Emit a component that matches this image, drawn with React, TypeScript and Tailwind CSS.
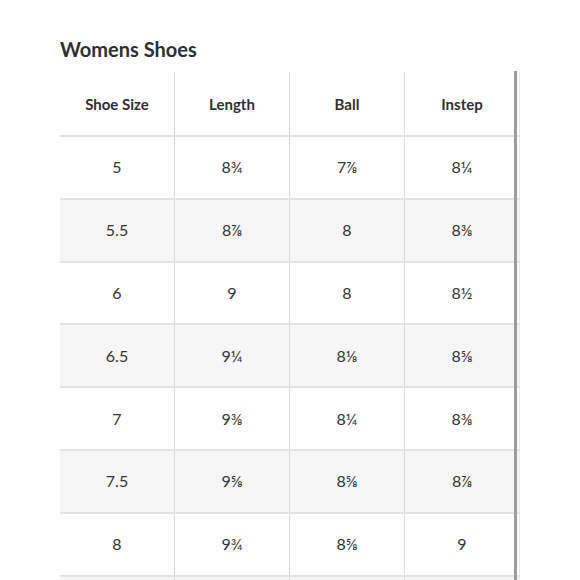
import React from "react";

const headers = ["Shoe Size", "Length", "Ball", "Instep"];

const rows: string[][] = [
  ["5", "8¾", "7⅞", "8¼"],
  ["5.5", "8⅞", "8", "8⅜"],
  ["6", "9", "8", "8½"],
  ["6.5", "9¼", "8⅛", "8⅝"],
  ["7", "9⅜", "8¼", "8⅜"],
  ["7.5", "9⅝", "8⅝", "8⅞"],
  ["8", "9¾", "8⅝", "9"],
  ["", "", "", ""],
];

export default function App() {
  return (
    <div className="h-[580px] w-[580px] overflow-hidden bg-white font-['Lato',sans-serif] text-[#2e2f32]">
      <div className="pl-[60px] pt-[36px]">
        <h2 className="text-[20px] font-bold leading-[26px]">Womens Shoes</h2>
        <div className="relative mt-[10px] w-[460px]">
          <div className="grid h-[65px] grid-cols-4 border-b-2 border-[#e3e3e3]">
            {headers.map((h, i) => (
              <div
                key={h}
                className={
                  "flex items-center justify-center pt-[2px] text-[15px] font-bold " +
                  (i < 3 ? "border-r border-[#d9d9d9]" : "border-r border-[#ececec]")
                }
              >
                {h}
              </div>
            ))}
          </div>
          {rows.map((r, ri) => (
            <div
              key={ri}
              className={
                "grid h-[62.8px] grid-cols-4 border-b-2 border-[#e3e3e3] " +
                (ri % 2 === 1 ? "bg-[#f6f6f6]" : "bg-white")
              }
            >
              {r.map((c, ci) => (
                <div
                  key={ci}
                  className={
                    "flex items-center justify-center text-[16px] text-[#333] " +
                    (ci < 3 ? "border-r border-[#d9d9d9]" : "border-r border-[#ececec]")
                  }
                >
                  {c}
                </div>
              ))}
            </div>
          ))}
          <div className="absolute right-[3px] top-[-1px] h-[600px] w-[3px] bg-[#9b9b9b]" />
        </div>
      </div>
    </div>
  );
}
